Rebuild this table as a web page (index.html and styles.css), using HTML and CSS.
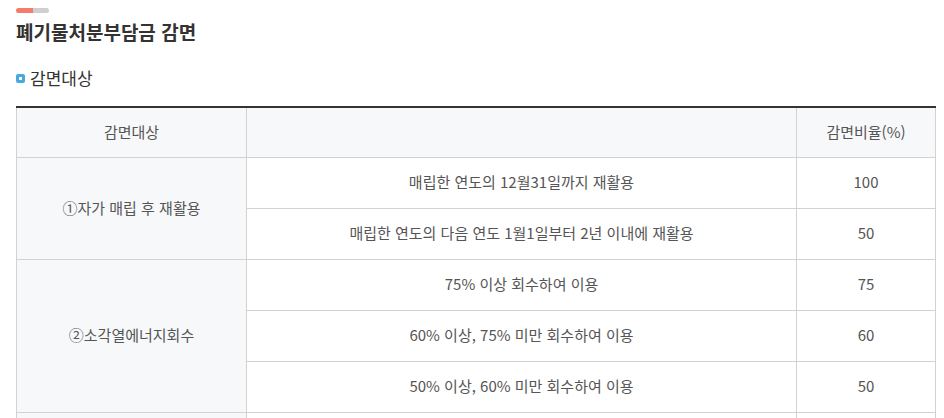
FILE: index.html
```html
<!DOCTYPE html>
<html lang="ko">
<head>
<meta charset="utf-8">
<link rel="stylesheet" href="styles.css">
</head>
<body>
<div class="page">
  <div class="bar"><span class="bar-red"></span><span class="bar-gray"></span></div>
  <h1 class="title">폐기물처분부담금 감면</h1>
  <h2 class="subtitle"><span class="sq"></span>감면대상</h2>
  <table class="tbl">
    <colgroup><col class="c1"><col class="c2"><col class="c3"></colgroup>
    <thead>
      <tr><th>감면대상</th><th></th><th>감면비율(%)</th></tr>
    </thead>
    <tbody>
      <tr><th rowspan="2">①자가 매립 후 재활용</th><td>매립한 연도의 12월31일까지 재활용</td><td>100</td></tr>
      <tr><td>매립한 연도의 다음 연도 1월1일부터 2년 이내에 재활용</td><td>50</td></tr>
      <tr><th rowspan="3">②소각열에너지회수</th><td>75% 이상 회수하여 이용</td><td>75</td></tr>
      <tr><td>60% 이상, 75% 미만 회수하여 이용</td><td>60</td></tr>
      <tr><td>50% 이상, 60% 미만 회수하여 이용</td><td>50</td></tr>
      <tr><th>&nbsp;</th><td>&nbsp;</td><td>&nbsp;</td></tr>
    </tbody>
  </table>
</div>
</body>
</html>
```
FILE: styles.css
```css
html, body { margin: 0; padding: 0; background: #fff; }
body { font-family: "Noto Sans CJK KR", "Noto Sans", sans-serif; color: #555; }
.page { padding: 8px 9px 0 16px; }
.bar { display: flex; width: 33px; height: 5px; border-radius: 3px; overflow: hidden; }
.bar-red { width: 17px; background: #f47c68; }
.bar-gray { flex: 1; background: #cfcfcf; }
.title { margin: 5px 0 0; font-size: 19px; font-weight: 700; color: #333; line-height: 28px; }
.subtitle { margin: 19px 0 0; font-size: 17px; font-weight: 400; color: #333; line-height: 26px; display: flex; align-items: center; }
.sq { width: 3px; height: 3px; border: 3px solid #4aa8e0; border-radius: 2px; background: #fff; margin-right: 5px; box-sizing: content-box; }
.tbl { margin-top: 15px; width: 919px; border-collapse: collapse; border-top: 2px solid #333; table-layout: fixed; font-size: 15px; }
.c1 { width: 230px; } .c2 { width: 550px; } .c3 { width: 139px; }
.tbl th, .tbl td { border: 1px solid #d2d2d2; height: 47px; padding: 0 0 3px; text-align: center; font-weight: 400; color: #555; }
.tbl thead th { border-top: none; height: 46px; }
.tbl th { background: #f7f8fa; }
```
